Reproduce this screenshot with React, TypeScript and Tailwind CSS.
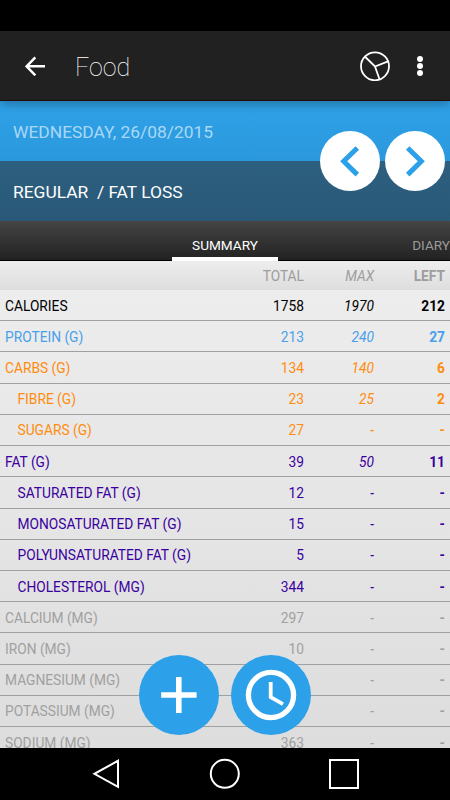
import clsx from 'clsx';

type Row = {
    name: string;
    total: string;
    max: string;
    left: string;
    color: string;
    indent?: boolean;
};

const BLUE = 'text-[#4a9fea]';
const ORANGE = 'text-[#ff8c0f]';
const PURPLE = 'text-[#3a00a0]';
const GREY = 'text-[#a0a0a0]';

const rows: Row[] = [
    { name: 'CALORIES', total: '1758', max: '1970', left: '212', color: 'text-black' },
    { name: 'PROTEIN (G)', total: '213', max: '240', left: '27', color: BLUE },
    { name: 'CARBS (G)', total: '134', max: '140', left: '6', color: ORANGE },
    { name: 'FIBRE (G)', total: '23', max: '25', left: '2', color: ORANGE, indent: true },
    { name: 'SUGARS (G)', total: '27', max: '-', left: '-', color: ORANGE, indent: true },
    { name: 'FAT (G)', total: '39', max: '50', left: '11', color: PURPLE },
    { name: 'SATURATED FAT (G)', total: '12', max: '-', left: '-', color: PURPLE, indent: true },
    { name: 'MONOSATURATED FAT (G)', total: '15', max: '-', left: '-', color: PURPLE, indent: true },
    { name: 'POLYUNSATURATED FAT (G)', total: '5', max: '-', left: '-', color: PURPLE, indent: true },
    { name: 'CHOLESTEROL (MG)', total: '344', max: '-', left: '-', color: PURPLE, indent: true },
    { name: 'CALCIUM (MG)', total: '297', max: '-', left: '-', color: GREY },
    { name: 'IRON (MG)', total: '10', max: '-', left: '-', color: GREY },
    { name: 'MAGNESIUM (MG)', total: '', max: '-', left: '-', color: GREY },
    { name: 'POTASSIUM (MG)', total: '', max: '-', left: '-', color: GREY },
    { name: 'SODIUM (MG)', total: '363', max: '-', left: '-', color: GREY },
];

function AppBar() {
    return (
        <header className="relative z-10 flex h-[70px] shrink-0 items-center border-b border-[#240a08] bg-[#212121] shadow-[0_3px_10px_rgba(0,0,0,0.3)]">
            <button className="ml-[25px]" aria-label="Back">
                <svg width="20" height="20" viewBox="0 0 20 20" fill="none" stroke="white" strokeWidth="2.5">
                    <path d="M20 10.3H2M10.3 1.3l-8.7 9 8.7 9" />
                </svg>
            </button>
            <h1 className="ml-[30px] pt-[5px] text-[25px] leading-8 font-thin text-white">Food</h1>
            <button className="ml-auto" aria-label="Chart">
                <svg width="30" height="30" viewBox="0 0 30 30" fill="none" stroke="white" strokeWidth="1.8">
                    <circle cx="15" cy="15.3" r="14" />
                    <path d="M4.8 5.5L15 15.5l13-5.2M15 15.5l4.6 13" />
                </svg>
            </button>
            <button className="mr-[27px] ml-[27px] flex flex-col gap-[1.6px] pt-px" aria-label="More">
                <span className="size-[5.8px] rounded-full bg-white" />
                <span className="size-[5.8px] rounded-full bg-white" />
                <span className="size-[5.8px] rounded-full bg-white" />
            </button>
        </header>
    );
}

function DayHeader() {
    return (
        <section className="relative shrink-0 text-[17.4px]">
            <div className="flex h-[60px] items-center bg-linear-to-b from-[#2fa2e8] to-[#2b98dd] pt-[3px] pl-[13px] text-[#a9d8f6]">
                WEDNESDAY, 26/08/2015
            </div>
            <div className="flex h-[60px] items-center bg-linear-to-b from-[#2d5f7f] to-[#2a5978] pt-[3px] pl-[13px] whitespace-pre text-white">
                REGULAR  / FAT LOSS
            </div>
            {/* Day switcher sits over both bands */}
            <div className="absolute top-[30px] right-[5px] flex gap-[5px]">
                <button className="size-[60px] rounded-full bg-white" aria-label="Previous day">
                    <svg width="60" height="60" viewBox="0 0 60 60" fill="none" stroke="#2ca0e8" strokeWidth="5">
                        <path d="M37.3 17L23.7 30.3l13.6 13.3" />
                    </svg>
                </button>
                <button className="size-[60px] rounded-full bg-white" aria-label="Next day">
                    <svg width="60" height="60" viewBox="0 0 60 60" fill="none" stroke="#2ca0e8" strokeWidth="5">
                        <path d="M22.7 17l13.6 13.3-13.6 13.3" />
                    </svg>
                </button>
            </div>
        </section>
    );
}

function Tabs() {
    return (
        <nav className="grid h-10 shrink-0 grid-cols-[1fr_106px_1fr] border-b border-black bg-linear-to-b from-[#454545] to-[#222222] text-[13.6px]">
            <span />
            <span className="-mb-px flex justify-center border-b-4 border-white pt-[14px] leading-5 text-white">SUMMARY</span>
            <span className="pt-[14px] text-right leading-5 text-[#9a9a9a]">DIARY</span>
        </nav>
    );
}

function NutrientRow({ row }: { row: Row }) {
    return (
        <div className={clsx('grid h-[31.23px] grid-cols-[1fr_80px_70px_71px] items-center border-b border-[#a0a0a0] pt-[1.6px] pr-[5px] text-right', row.color)}>
            <span className={clsx('text-left', row.indent ? 'pl-[17.5px]' : 'pl-[5px]')}>{row.name}</span>
            <span>{row.total}</span>
            <span className="italic">{row.max}</span>
            <span className="font-bold">{row.left}</span>
        </div>
    );
}

function SummaryTable() {
    return (
        <section className="min-h-0 flex-1 overflow-hidden bg-linear-to-b from-[#eeeeee] to-[#dddddd] text-[13.75px]">
            <div className="grid h-[29px] grid-cols-[1fr_80px_70px_71px] items-center bg-linear-to-b from-[#ededed] to-[#dedede] pt-[2px] pr-[5px] text-right text-[#9d9d9d]">
                <span />
                <span>TOTAL</span>
                <span className="italic">MAX</span>
                <span className="font-bold">LEFT</span>
            </div>
            {rows.map(row => (
                <NutrientRow key={row.name} row={row} />
            ))}
        </section>
    );
}

function ActionButtons() {
    return (
        <div className="absolute bottom-[65px] left-[139px] flex gap-3">
            <button className="size-20 rounded-full bg-[#2ca0e8]" aria-label="Add">
                <svg width="80" height="80" viewBox="0 0 80 80" fill="none" stroke="white" strokeWidth="5.6">
                    <path d="M22.2 40h35.4M39.8 22v36" />
                </svg>
            </button>
            <button className="size-20 rounded-full bg-[#2ca0e8]" aria-label="Recent">
                <svg width="80" height="80" viewBox="0 0 80 80" fill="none" stroke="white">
                    <circle cx="40" cy="40" r="22.6" strokeWidth="5.3" />
                    <path d="M39.7 27v15.2l12.3 7" strokeWidth="3.8" />
                </svg>
            </button>
        </div>
    );
}

function NavigationBar() {
    return (
        <footer className="flex h-[52.5px] shrink-0 items-center justify-between bg-black px-[91px]">
            <svg width="30" height="32" viewBox="0 0 30 32" fill="none" stroke="white" strokeWidth="2">
                <path d="M27 2.8v26L3.4 15.8z" />
            </svg>
            <svg width="32" height="32" viewBox="0 0 32 32" fill="none" stroke="white" strokeWidth="2">
                <circle cx="15.8" cy="15.8" r="14" />
            </svg>
            <svg width="30" height="32" viewBox="0 0 30 32" fill="none" stroke="white" strokeWidth="2">
                <path d="M1 2h28v28H1z" />
            </svg>
        </footer>
    );
}

export default function App() {
    return (
        <main className="relative flex h-[800px] w-[450px] flex-col overflow-hidden bg-black font-['Roboto',sans-serif]">
            <div className="h-[31px] shrink-0 bg-black" />
            <AppBar />
            <DayHeader />
            <Tabs />
            <SummaryTable />
            <ActionButtons />
            <NavigationBar />
        </main>
    );
}
